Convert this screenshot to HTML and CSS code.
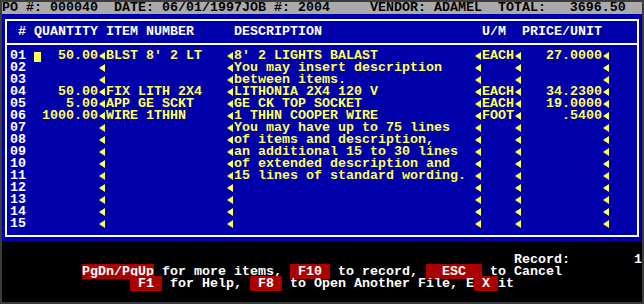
FILE: index.html
```html
<!DOCTYPE html>
<html>

<head>
    <meta name="viewport" content="width=device-width, initial-scale=1">
    <link rel="stylesheet" href="styles.css">
</head>

<body>
    <div class="screen">
        <div class="title">PO #: 000040  DATE: 06/01/1997JOB #: 2004     VENDOR: ADAMEL  TOTAL:   3696.50</div>

        <div class="panel">
            <div class="box">
                <div class="row head">
                    <span class="no">#</span>
                    <span class="qty">QUANTITY</span>
                    <span class="item">ITEM NUMBER</span>
                    <span class="desc">DESCRIPTION</span>
                    <span class="um">U/M</span>
                    <span class="price">PRICE/UNIT</span>
                </div>
                <div class="rule"></div>

                <div class="row"><span class="no">01</span><span class="f qty"><b class="cursor"></b>50.00</span><span class="f item">BLST 8' 2 LT</span><span class="f desc">8' 2 LIGHTS BALAST</span><span class="f um">EACH</span><span class="f price">27.0000</span></div>
                <div class="row"><span class="no">02</span><span class="f qty"></span><span class="f item"></span><span class="f desc">You may insert description</span><span class="f um"></span><span class="f price"></span></div>
                <div class="row"><span class="no">03</span><span class="f qty"></span><span class="f item"></span><span class="f desc">between items.</span><span class="f um"></span><span class="f price"></span></div>
                <div class="row"><span class="no">04</span><span class="f qty">50.00</span><span class="f item">FIX LITH 2X4</span><span class="f desc">LITHONIA 2X4 120 V</span><span class="f um">EACH</span><span class="f price">34.2300</span></div>
                <div class="row"><span class="no">05</span><span class="f qty">5.00</span><span class="f item">APP GE SCKT</span><span class="f desc">GE CK TOP SOCKET</span><span class="f um">EACH</span><span class="f price">19.0000</span></div>
                <div class="row"><span class="no">06</span><span class="f qty">1000.00</span><span class="f item">WIRE 1THHN</span><span class="f desc">1 THHN COOPER WIRE</span><span class="f um">FOOT</span><span class="f price">.5400</span></div>
                <div class="row"><span class="no">07</span><span class="f qty"></span><span class="f item"></span><span class="f desc">You may have up to 75 lines</span><span class="f um"></span><span class="f price"></span></div>
                <div class="row"><span class="no">08</span><span class="f qty"></span><span class="f item"></span><span class="f desc">of items and description,</span><span class="f um"></span><span class="f price"></span></div>
                <div class="row"><span class="no">09</span><span class="f qty"></span><span class="f item"></span><span class="f desc">an additional 15 to 30 lines</span><span class="f um"></span><span class="f price"></span></div>
                <div class="row"><span class="no">10</span><span class="f qty"></span><span class="f item"></span><span class="f desc">of extended description and</span><span class="f um"></span><span class="f price"></span></div>
                <div class="row"><span class="no">11</span><span class="f qty"></span><span class="f item"></span><span class="f desc">15 lines of standard wording.</span><span class="f um"></span><span class="f price"></span></div>
                <div class="row"><span class="no">12</span><span class="f qty"></span><span class="f item"></span><span class="f desc"></span><span class="f um"></span><span class="f price"></span></div>
                <div class="row"><span class="no">13</span><span class="f qty"></span><span class="f item"></span><span class="f desc"></span><span class="f um"></span><span class="f price"></span></div>
                <div class="row"><span class="no">14</span><span class="f qty"></span><span class="f item"></span><span class="f desc"></span><span class="f um"></span><span class="f price"></span></div>
                <div class="row"><span class="no">15</span><span class="f qty"></span><span class="f item"></span><span class="f desc"></span><span class="f um"></span><span class="f price"></span></div>
            </div>
        </div>

        <div class="footer">
            <div class="line"></div>
            <div class="line record"><span>Record:</span><span>1</span></div>
            <div class="line keys-1"><span class="key">PgDn/PgUp</span> for more items, <span class="key"> F10 </span> to record, <span class="key">  ESC  </span> to Cancel</div>
            <div class="line keys-2"><span class="key"> F1 </span> for Help, <span class="key"> F8 </span> to Open Another File, E<span class="key"> X </span>it</div>
            <div class="line"></div>
        </div>
    </div>
</body>

</html>
```

FILE: styles.css
```css
body {
    margin: 0;
    background-color: #3c3c3c;
}

.screen {
    width: 640px;
    margin: 2px;
    font-family: "Liberation Mono", monospace;
    font-weight: bold;
    font-size: 13.333px;
    line-height: 12px;
}

.title {
    height: 12px;
    white-space: pre;
    background-color: #aaaaaa;
    color: #000000;
}

.panel {
    height: 228px;
    box-sizing: border-box;
    padding: 5px 3px 0 3px;
    background-color: #0000aa;
}

.box {
    border: 2px solid #ffffff;
    padding: 5px 0;
}

.rule {
    border-top: 2px solid #ffffff;
    margin: 5px 0;
}

.row {
    display: flex;
    height: 12px;
    padding-left: 3px;
    white-space: pre;
    color: #ffff55;
}

.row span {
    flex-shrink: 0;
}

.row.head {
    color: #ffffff;
}

.no {
    width: 24px;
    color: #ffffff;
}

.head .no {
    text-align: center;
}

.qty {
    width: 72px;
}

.item {
    width: 128px;
}

.desc {
    width: 248px;
}

.um {
    width: 40px;
}

.price {
    width: 88px;
}

/* every input field ends with a little arrow marker */
.f {
    display: flex;
}

.f::after {
    content: "";
    flex-shrink: 0;
    width: 0;
    height: 0;
    margin: 2px 1px 0 auto;
    border-right: 6px solid #ffff55;
    border-top: 4.5px solid transparent;
    border-bottom: 4.5px solid transparent;
}

.f.qty,
.f.price {
    justify-content: flex-end;
}

.f.qty::after,
.f.price::after {
    margin-left: 1px;
}

.cursor {
    width: 7px;
    height: 10px;
    margin: 2px auto 0 0;
    background-color: #ffff55;
}

.footer {
    background-color: #000000;
    color: #ffffff;
}

.line {
    height: 12px;
    white-space: pre;
}

.record {
    display: flex;
    justify-content: space-between;
    padding-left: 512px;
}

.keys-1 {
    padding-left: 80px;
}

.keys-2 {
    padding-left: 128px;
}

.key {
    background-color: #aa0000;
}
```
